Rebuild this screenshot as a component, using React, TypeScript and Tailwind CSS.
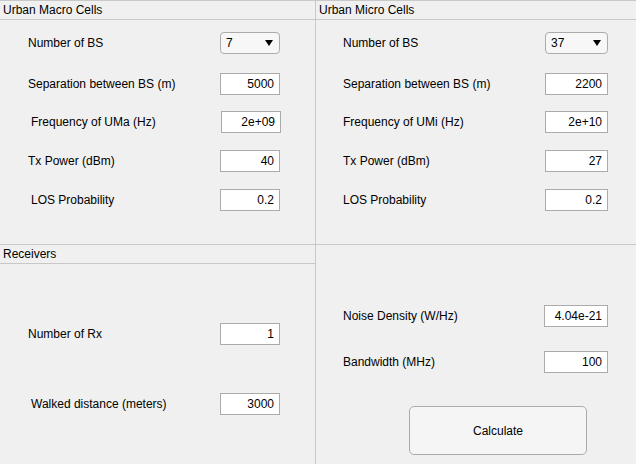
import React from 'react';

type FieldProps = {
  label: string;
  value: string;
  labelPad: string;
  boxPad: string;
  boxW: string;
  top: string;
  dropdown?: boolean;
};

// one label + edit box row, MATLAB style
function Field({ label, value, labelPad, boxPad, boxW, top, dropdown }: FieldProps) {
  return (
    <div className={`flex items-center h-[22px] ${top}`}>
      <div className={`${labelPad} ${boxPad} whitespace-nowrap text-[12px] leading-[22px] text-black`}>
        {label}
      </div>
      {dropdown ? (
        <div className={`${boxW} h-[22px] flex items-center justify-between pl-[5px] pr-[6px] rounded-[4px] border border-[#ababab] bg-[#f7f7f7] text-[12px] text-black`}>
          <span>{value}</span>
          <svg width="8" height="6" viewBox="0 0 8 6">
            <path d="M0 0 L8 0 L4 6 Z" fill="#000" />
          </svg>
        </div>
      ) : (
        <div className={`${boxW} h-[22px] flex items-center justify-end pr-[5px] border border-[#ababab] bg-white text-[12px] text-black`}>
          {value}
        </div>
      )}
    </div>
  );
}

function Title({ text }: { text: string }) {
  return (
    <div className="h-[19px] border-b border-[#c8c8c8] pl-[3px] text-[12px] leading-[18px] text-black">
      {text}
    </div>
  );
}

export default function App() {
  return (
    <div
      className="w-[636px] h-[464px] bg-[#f0f0f0] border-t border-[#c8c8c8] flex flex-col overflow-hidden"
      style={{ fontFamily: '"Liberation Sans", Arial, sans-serif' }}
    >
      <div className="h-[244px] flex border-b border-[#c8c8c8]">
        <div className="w-[316px] border-r border-[#c8c8c8] flex flex-col">
          <Title text="Urban Macro Cells" />
          <Field label="Number of BS" value="7" dropdown labelPad="pl-[28px]" boxPad="w-[220px]" boxW="w-[60px]" top="mt-[12px]" />
          <Field label="Separation between BS (m)" value="5000" labelPad="pl-[28px]" boxPad="w-[220px]" boxW="w-[60px]" top="mt-[19px]" />
          <Field label="Frequency of UMa (Hz)" value="2e+09" labelPad="pl-[31px]" boxPad="w-[221px]" boxW="w-[60px]" top="mt-[16px]" />
          <Field label="Tx Power (dBm)" value="40" labelPad="pl-[28px]" boxPad="w-[220px]" boxW="w-[60px]" top="mt-[17px]" />
          <Field label="LOS Probability" value="0.2" labelPad="pl-[31px]" boxPad="w-[220px]" boxW="w-[60px]" top="mt-[17px]" />
        </div>
        <div className="flex-1 flex flex-col">
          <Title text="Urban Micro Cells" />
          <Field label="Number of BS" value="37" dropdown labelPad="pl-[27px]" boxPad="w-[229px]" boxW="w-[63px]" top="mt-[12px]" />
          <Field label="Separation between BS (m)" value="2200" labelPad="pl-[27px]" boxPad="w-[229px]" boxW="w-[63px]" top="mt-[19px]" />
          <Field label="Frequency of UMi (Hz)" value="2e+10" labelPad="pl-[27px]" boxPad="w-[229px]" boxW="w-[63px]" top="mt-[16px]" />
          <Field label="Tx Power (dBm)" value="27" labelPad="pl-[27px]" boxPad="w-[229px]" boxW="w-[63px]" top="mt-[17px]" />
          <Field label="LOS Probability" value="0.2" labelPad="pl-[27px]" boxPad="w-[229px]" boxW="w-[63px]" top="mt-[17px]" />
        </div>
      </div>
      <div className="flex-1 flex">
        <div className="w-[316px] border-r border-[#c8c8c8] flex flex-col">
          <Title text="Receivers" />
          <Field label="Number of Rx" value="1" labelPad="pl-[28px]" boxPad="w-[220px]" boxW="w-[60px]" top="mt-[59px]" />
          <Field label="Walked distance (meters)" value="3000" labelPad="pl-[31px]" boxPad="w-[220px]" boxW="w-[60px]" top="mt-[48px]" />
        </div>
        <div className="flex-1 flex flex-col">
          <Field label="Noise Density (W/Hz)" value="4.04e-21" labelPad="pl-[27px]" boxPad="w-[228px]" boxW="w-[64px]" top="mt-[60px]" />
          <Field label="Bandwidth (MHz)" value="100" labelPad="pl-[27px]" boxPad="w-[228px]" boxW="w-[64px]" top="mt-[24px]" />
          <div className="ml-[93px] mt-[33px] w-[178px] h-[49px] rounded-[5px] border border-[#ababab] bg-[#f5f5f5] flex items-center justify-center text-[12px] text-black">
            Calculate
          </div>
        </div>
      </div>
    </div>
  );
}
